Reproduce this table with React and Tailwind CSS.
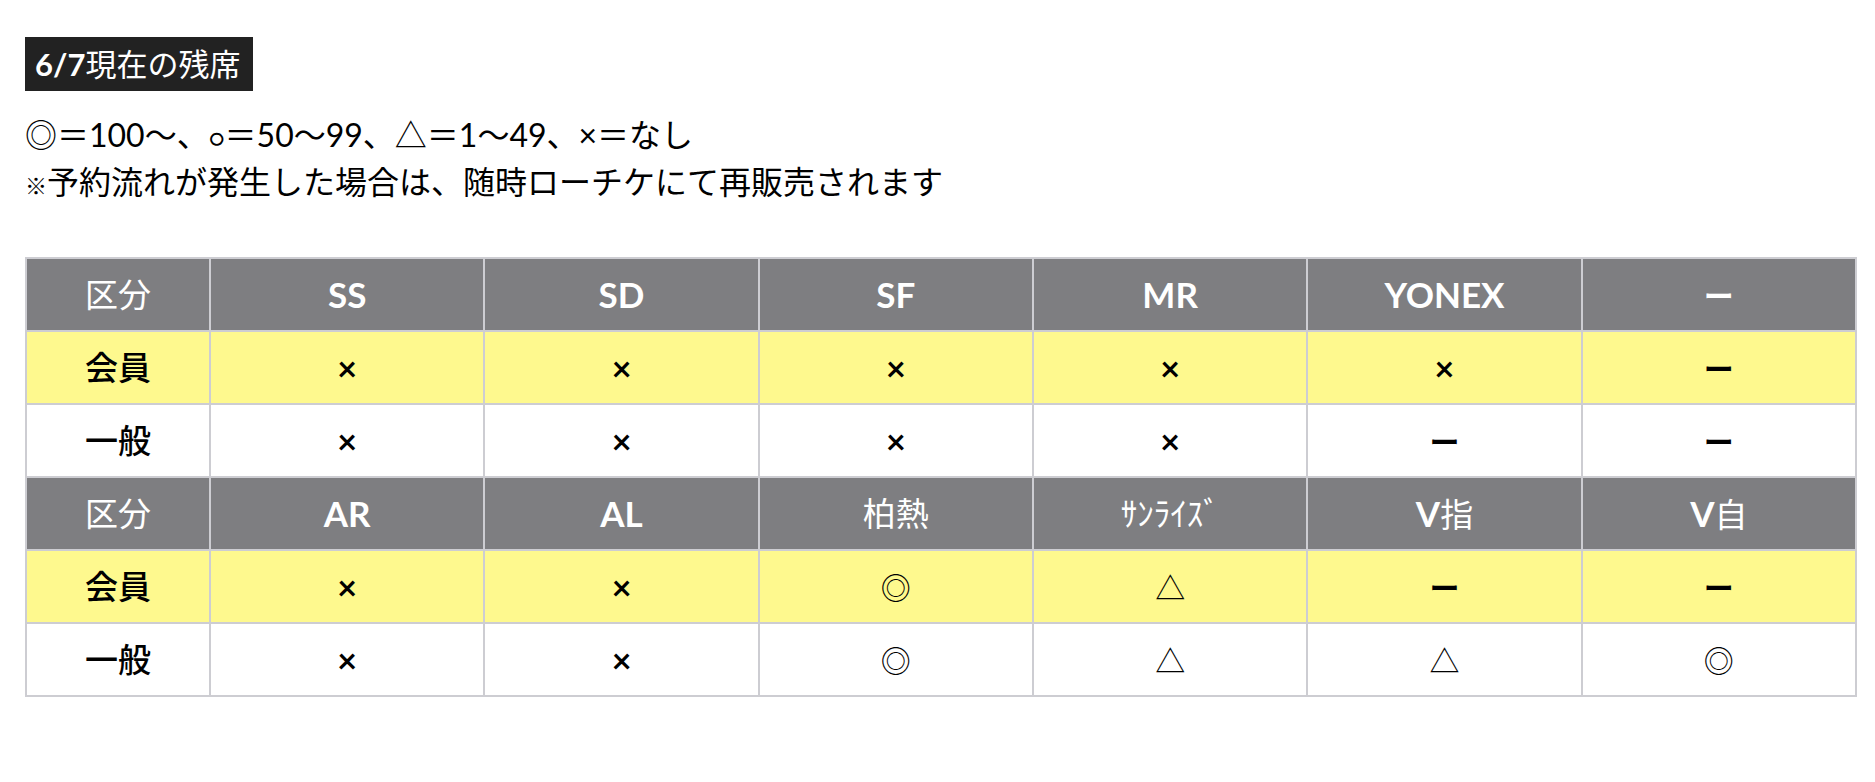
import React from "react";

const rows = [
  { type: "head", cells: ["区分", "SS", "SD", "SF", "MR", "YONEX", "ー"] },
  { type: "member", cells: ["会員", "×", "×", "×", "×", "×", "ー"] },
  { type: "general", cells: ["一般", "×", "×", "×", "×", "ー", "ー"] },
  { type: "head", cells: ["区分", "AR", "AL", "柏熱", "ｻﾝﾗｲｽﾞ", "V指", "V自"] },
  { type: "member", cells: ["会員", "×", "×", "◎", "△", "ー", "ー"] },
  { type: "general", cells: ["一般", "×", "×", "◎", "△", "△", "◎"] },
];

function Mixed({ text }) {
  const parts = [];
  let buf = "";
  let cur = null;
  for (const ch of text) {
    const latin = /[A-Za-z0-9\/]/.test(ch);
    if (cur === null) cur = latin;
    if (latin !== cur) {
      parts.push({ latin: cur, t: buf });
      buf = "";
      cur = latin;
    }
    buf += ch;
  }
  if (buf) parts.push({ latin: cur, t: buf });
  return (
    <>
      {parts.map((p, i) => (
        <span
          key={i}
          className={p.latin ? "font-bold text-[35px]" : "font-normal text-[33px]"}
        >
          {p.t}
        </span>
      ))}
    </>
  );
}

function Symbol({ v }) {
  if (v === "×") return <span className="font-bold text-[34px]">×</span>;
  if (v === "ー") return <span className="font-bold text-[30px]">ー</span>;
  return <span className="font-normal text-[30px]">{v}</span>;
}

export default function App() {
  return (
    <div className="min-h-[782px] w-full bg-white font-['Lato','Noto_Sans_CJK_JP',sans-serif] text-black">
      <div className="px-[25px] pt-[37px]">
        <div className="flex h-[54px] w-fit items-center bg-[#222222] pl-[10px] pr-[13px] text-[31px] leading-none text-white">
          <span className="font-bold">6/7</span>
          <span className="font-normal">現在の残席</span>
        </div>

        <div className="mt-[22px] text-[32px] leading-[44px]">
          <div>
            ◎＝100〜、<span className="text-[24px]">○</span>＝50〜99、△＝1〜49、×＝なし
          </div>
          <div>
            <span className="text-[22px]">※</span>予約流れが発生した場合は、随時ローチケにて再販売されます
          </div>
        </div>

        <table className="mt-[49px] w-[1832px] table-fixed border-collapse border-2 border-[#cdcdd2]">
          <colgroup>
            <col className="w-[184px]" />
            <col />
            <col />
            <col />
            <col />
            <col />
            <col />
          </colgroup>
          <tbody>
            {rows.map((r, ri) => {
              const rowBg =
                r.type === "head"
                  ? "bg-[#7e7e81] text-white"
                  : r.type === "member"
                  ? "bg-[#fef98e] text-black"
                  : "bg-white text-black";
              return (
                <tr key={ri} className={`h-[73px] ${rowBg}`}>
                  {r.cells.map((c, ci) => (
                    <td
                      key={ci}
                      className="border-2 border-[#cdcdd2] p-0 text-center align-middle leading-none"
                    >
                      {r.type === "head" ? (
                        c === "ー" ? (
                          <span className="font-bold text-[30px]">ー</span>
                        ) : (
                          <Mixed text={c} />
                        )
                      ) : ci === 0 ? (
                        <span className="font-medium text-[33px]">{c}</span>
                      ) : (
                        <Symbol v={c} />
                      )}
                    </td>
                  ))}
                </tr>
              );
            })}
          </tbody>
        </table>
      </div>
    </div>
  );
}
